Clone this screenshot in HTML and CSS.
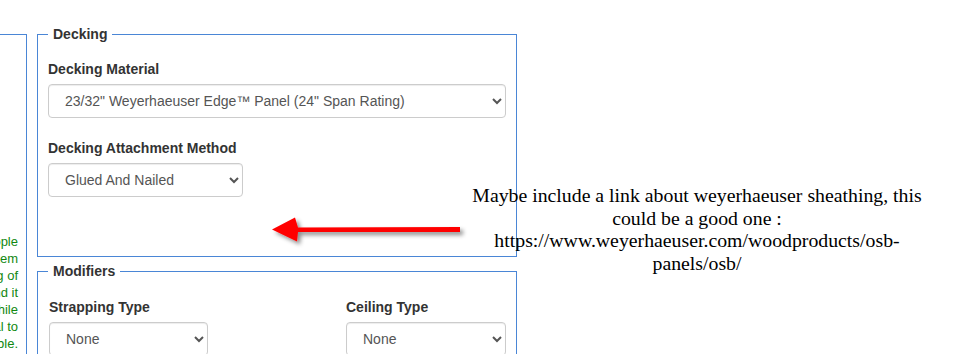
FILE: index.html
```html
<html lang="en">
<head>
	<meta http-equiv="Content-Type" content="text/html; charset=utf-8">
	<meta name="viewport" content="width=device-width, initial-scale=1.0">
	<title>Roof Assembly</title>
	<link rel="stylesheet" href="styles.css">
</head>
<body>

<div class="page">
	<div class="side">
		<fieldset class="side-box">
			<div class="note">
				Ventilation must be provided for people<br>
				working in the attic of this system<br>
				with a maximum rafter spacing of<br>
				24 inches on center, and it<br>
				should be checked while<br>
				framing is equal to<br>
				the tabulated values where applicable.
			</div>
		</fieldset>
	</div>

	<div class="main">
		<fieldset class="group decking">
			<legend>Decking</legend>
			<div class="form-group">
				<label>Decking Material</label>
				<select class="form-control">
					<option>23/32" Weyerhaeuser Edge™ Panel (24" Span Rating)</option>
				</select>
			</div>
			<div class="form-group">
				<label>Decking Attachment Method</label>
				<select class="form-control short">
					<option>Glued And Nailed</option>
				</select>
			</div>
		</fieldset>

		<fieldset class="group modifiers">
			<legend>Modifiers</legend>
			<div class="row">
				<div class="form-group col-a">
					<label>Strapping Type</label>
					<select class="form-control">
						<option>None</option>
					</select>
				</div>
				<div class="form-group">
					<label>Ceiling Type</label>
					<select class="form-control">
						<option>None</option>
					</select>
				</div>
			</div>
		</fieldset>
	</div>
</div>

<!-- review comment pasted over the form -->
<svg class="arrow" width="200" height="40" viewBox="0 0 200 40">
	<defs>
		<filter id="shade" x="-10%" y="-50%" width="130%" height="220%">
			<feDropShadow dx="3" dy="3" stdDeviation="2" flood-color="#000" flood-opacity="0.45"></feDropShadow>
		</filter>
	</defs>
	<g filter="url(#shade)">
		<polygon points="4,17.5 27,5.5 30,15.5 192,15 192,20 30,20 29,29.5" fill="#f00"></polygon>
	</g>
</svg>

<div class="comment">
	Maybe include a link about weyerhaeuser sheathing, this<br>
	could be a good one :<br>
	https://www.weyerhaeuser.com/woodproducts/osb-<br>
	panels/osb/
</div>

</body>
</html>
```

FILE: styles.css
```css
body{
	margin: 0;
	padding: 0;
	font-family: "Liberation Sans", Arial, sans-serif;
	font-size: 14px;
	color: #333;
	background: #fff;
	overflow: hidden;
}

.page{
	display: flex;
	align-items: flex-start;
	gap: 10px;
}

.side{
	width: 27px;
	overflow: hidden;
	flex: none;
	padding-top: 34px;
}

.side-box{
	width: 260px;
	margin: 0 0 0 -233px;
	padding: 0 8px 0 0;
	border: 1px solid #4a86d6;
	height: 400px;
	box-sizing: border-box;
}

.note{
	margin-top: 198px;
	font-size: 13px;
	line-height: 17px;
	color: #118811;
	text-align: right;
	white-space: nowrap;
}

.main{
	width: 480px;
	flex: none;
	padding-top: 26px;
}

.group{
	margin: 0;
	padding: 17px 10px 0 10px;
	border: 1px solid #4a86d6;
	min-width: 0;
}

.group legend{
	padding: 0 5px;
	font-size: 14px;
	font-weight: bold;
	line-height: 16px;
	color: #333;
}

.decking{
	padding-bottom: 39px;
}

.modifiers{
	margin-top: 6px;
	padding-top: 18px;
}

.form-group{
	margin-bottom: 20px;
}

label{
	display: block;
	font-weight: bold;
	line-height: 20px;
	margin-bottom: 5px;
}

.form-control{
	display: block;
	width: 100%;
	height: 34px;
	padding: 6px 12px;
	font-family: "Liberation Sans", Arial, sans-serif;
	font-size: 14px;
	color: #555;
	background: #fff;
	border: 1px solid #ccc;
	border-radius: 4px;
	box-shadow: inset 0 1px 1px rgba(0,0,0,.075);
	box-sizing: border-box;
}

.short{
	width: 195px;
}

.row{
	display: grid;
	grid-template-columns: 298px 160px;
}

.row .form-control{
	width: 160px;
}

.col-a{
	padding-left: 1px;
}

.col-a .form-control{
	width: 159px;
}

.arrow{
	position: absolute;
	left: 268px;
	top: 212px;
}

.comment{
	position: absolute;
	left: 437px;
	top: 184px;
	width: 520px;
	font-family: "Liberation Serif", "Times New Roman", serif;
	font-size: 19.8px;
	line-height: 22.7px;
	color: #000;
	text-align: center;
}
```
